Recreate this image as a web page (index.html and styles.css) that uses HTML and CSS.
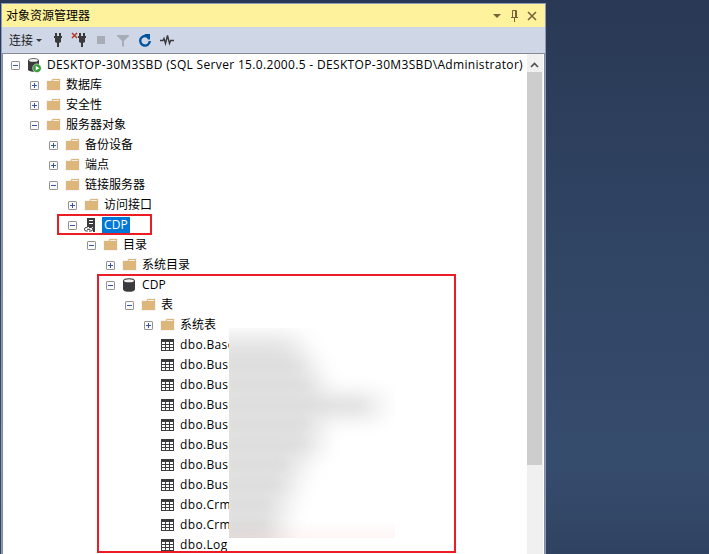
FILE: index.html
```
<!DOCTYPE html>
<html lang="zh-CN">
<head>
<meta charset="utf-8">
<title>对象资源管理器</title>
<link rel="stylesheet" href="styles.css">
</head>
<body>
<svg class="defs" width="0" height="0">
  <symbol id="folder" viewBox="0 0 16 14"><path class="halo" d="M0 2h5l1-2h9v13H0z"/><path class="tan" d="M1 3h4.5l1-2H14v11H1z"/><path class="fold" d="M6.5 3L7.3 2H13v1z"/></symbol>
  <symbol id="table" viewBox="0 0 16 14"><path class="ink" d="M1 1h13v12H1z"/><path class="paper" d="M2 4h3v2H2zM6 4h3v2H6zM10 4h3v2h-3zM2 7h3v2H2zM6 7h3v2H6zM10 7h3v2h-3zM2 10h3v2H2zM6 10h3v2H6zM10 10h3v2h-3z"/></symbol>
  <symbol id="database" viewBox="0 0 16 14"><path class="ink" d="M1 2.8C1-.5 13-.5 13 2.8v8.4c0 3.4-12 3.4-12 0z"/><ellipse class="lid" cx="7" cy="2.8" rx="4.9" ry="1.5"/></symbol>
  <symbol id="expand" viewBox="0 0 9 9"><rect class="box" x=".5" y=".5" width="8" height="8" rx=".6"/><path class="sign" d="M2 4.5h5M4.5 2v5"/></symbol>
  <symbol id="collapse" viewBox="0 0 9 9"><rect class="box" x=".5" y=".5" width="8" height="8" rx=".6"/><path class="sign" d="M2 4.5h5"/></symbol>
</svg>
<main class="panel">
  <header class="title"><h1>对象资源管理器</h1>
    <svg class="controls" width="46" height="12" viewBox="0 0 46 12"><path class="brown" d="M1 4h8L5 8z"/><path class="pin" d="M20.5 7V.5h4V7M19 7.5h7M22.5 7v5M23.5 1v6"/><path class="close" d="M36 2l8 8M44 2l-8 8"/></svg>
  </header>
  <div class="toolbar"><span>连接</span>
    <svg width="140" height="18" viewBox="0 0 140 18">
      <path class="ink" d="M1 8h6L4 11z"/>
      <path class="ink" d="M20 2h2v3h2V2h2v3h1v2h-1v4l-2 1v4h-2v-4l-2-1V7h-1V5h1z"/>
      <path class="redx" d="M37 2l5 5M42 2l-5 5"/>
      <path class="ink" d="M44 2h2v3h2V2h2v3h1v2h-1v4l-2 1v4h-2v-4l-2-1V7h-1V5h1z"/>
      <path class="disabled" d="M62 5h8v8h-8zM82 4h12v1l-5 5v6l-2-1v-5l-5-5z"/>
      <path class="refresh" d="M112.3 5.6A4.8 4.8 0 1 0 114.8 10"/><path class="blue" d="M109.5 3H115v5.5h-2z"/>
      <path class="pulse" d="M125 9.5h3l1-2 1.5 5 2-8 2 8 1.2-3h3.3"/>
    </svg>
  </div>
  <div class="body">
    <div class="tree">
      <div class="row"><svg class="toggle"><use href="#collapse"/></svg><svg class="icon server" viewBox="0 0 16 16"><path class="ink" d="M1 3.6C1 .3 12 .3 12 3.6v9c-1 2.8-11 2.8-11 0z"/><ellipse class="lid" cx="6.5" cy="3.4" rx="4.5" ry="1.4"/><circle class="green" cx="10" cy="11.2" r="4.3"/><path class="paper" d="M8.7 8.8v4.8l3.8-2.4z"/></svg><span class="root">DESKTOP-30M3SBD (SQL Server 15.0.2000.5 - DESKTOP-30M3SBD\Administrator)</span></div>
      <div class="row l1"><svg class="toggle"><use href="#expand"/></svg><svg class="icon"><use href="#folder"/></svg><span>数据库</span></div>
      <div class="row l1"><svg class="toggle"><use href="#expand"/></svg><svg class="icon"><use href="#folder"/></svg><span>安全性</span></div>
      <div class="row l1"><svg class="toggle"><use href="#collapse"/></svg><svg class="icon"><use href="#folder"/></svg><span>服务器对象</span></div>
      <div class="row l2"><svg class="toggle"><use href="#expand"/></svg><svg class="icon"><use href="#folder"/></svg><span>备份设备</span></div>
      <div class="row l2"><svg class="toggle"><use href="#expand"/></svg><svg class="icon"><use href="#folder"/></svg><span>端点</span></div>
      <div class="row l2"><svg class="toggle"><use href="#collapse"/></svg><svg class="icon"><use href="#folder"/></svg><span>链接服务器</span></div>
      <div class="row l3"><svg class="toggle"><use href="#expand"/></svg><svg class="icon"><use href="#folder"/></svg><span>访问接口</span></div>
      <div class="row l3"><svg class="toggle"><use href="#collapse"/></svg><svg class="icon linked" viewBox="0 0 16 16"><path class="ink" d="M3 1h8v14H9v-5H3z"/><path class="vent" d="M5 3.5h4M5 6.5h4"/><path class="chain" d="M3.5 10.5H2.2a1.7 1.7 0 0 0 0 3.5h1.6M5 10.5h2a1.7 1.7 0 0 1 0 3.5H5M3 12.3h3.4"/></svg><span class="cdp selected">CDP</span></div>
      <div class="row l4"><svg class="toggle"><use href="#collapse"/></svg><svg class="icon"><use href="#folder"/></svg><span>目录</span></div>
      <div class="row l5"><svg class="toggle"><use href="#expand"/></svg><svg class="icon"><use href="#folder"/></svg><span>系统目录</span></div>
      <div class="row l5"><svg class="toggle"><use href="#collapse"/></svg><svg class="icon"><use href="#database"/></svg><span class="cdp">CDP</span></div>
      <div class="row l6"><svg class="toggle"><use href="#collapse"/></svg><svg class="icon"><use href="#folder"/></svg><span>表</span></div>
      <div class="row l7"><svg class="toggle"><use href="#expand"/></svg><svg class="icon"><use href="#folder"/></svg><span>系统表</span></div>
      <div class="row leaf"><svg class="icon"><use href="#table"/></svg><span>dbo.Base</span></div>
      <div class="row leaf"><svg class="icon"><use href="#table"/></svg><span>dbo.Busi</span></div>
      <div class="row leaf"><svg class="icon"><use href="#table"/></svg><span>dbo.Busi</span></div>
      <div class="row leaf"><svg class="icon"><use href="#table"/></svg><span>dbo.Busi</span></div>
      <div class="row leaf"><svg class="icon"><use href="#table"/></svg><span>dbo.Busi</span></div>
      <div class="row leaf"><svg class="icon"><use href="#table"/></svg><span>dbo.Busi</span></div>
      <div class="row leaf"><svg class="icon"><use href="#table"/></svg><span>dbo.Busi</span></div>
      <div class="row leaf"><svg class="icon"><use href="#table"/></svg><span>dbo.Busi</span></div>
      <div class="row leaf"><svg class="icon"><use href="#table"/></svg><span>dbo.Crm</span></div>
      <div class="row leaf"><svg class="icon"><use href="#table"/></svg><span>dbo.Crm</span></div>
      <div class="row leaf"><svg class="icon"><use href="#table"/></svg><span>dbo.Log</span></div>
    </div>
    <div class="scroll"><svg width="15" height="17" viewBox="0 0 15 17"><path class="arrow" d="M4 12l3.5-3.5L11 12"/></svg><div class="thumb"></div></div>
  </div>
</main>
<svg class="redaction" width="166" height="210" viewBox="0 0 166 210">
  <defs><filter id="soft" x="-30%" y="-30%" width="160%" height="160%"><feGaussianBlur stdDeviation="13 10"/></filter>
  <linearGradient id="pink" x1="0" y1="0" x2="0" y2="1"><stop offset="0" stop-color="#e86450" stop-opacity="0"/><stop offset="1" stop-color="#e86450" stop-opacity=".06"/></linearGradient></defs>
  <path class="cover" d="M0 0h166v210H0z"/>
  <path class="smear" filter="url(#soft)" d="M-50 8H70v20H84v20H92v18H149v24H90v38H72v20H65v20H56v24H52v32H-50z"/>
  <path class="band" d="M0 37h75M0 57h85M0 77h135M0 97h80M0 117h80M0 137h60M0 157h55M0 177h42M0 196h40"/>
  <path fill="url(#pink)" d="M0 192h166v18H0z"/>
</svg>
<div class="mark mark-server"></div>
<div class="mark mark-tables"></div>
</body>
</html>
```

FILE: styles.css
```
* { box-sizing: border-box; }
html, body { margin: 0; height: 554px; overflow: hidden; }
body {
  position: relative;
  padding: 3px 0 0 1px;
  background: linear-gradient(#293955, #2d3f5d 130px, #364c6d 440px, #364c6d 470px, #304261);
  color: #000;
  font: 12px/20px "Open Sans", "Noto Sans CJK SC", sans-serif;
}
.defs { position: absolute; }
svg { display: block; flex: none; }
.panel { display: flex; flex-direction: column; width: 545px; height: 551px; border: 1px solid #8e9bbc; border-bottom: 0; }
.title { display: flex; align-items: center; justify-content: space-between; height: 23px; padding: 0 7px 0 4px; background: #fff29d; }
h1 { margin: 0; font-size: 12px; font-weight: 400; }
.toolbar { display: flex; align-items: center; height: 26px; padding-left: 7px; background: #cfd6e5; color: #1e1e1e; }
.toolbar span { padding-top: 2px; }
.toolbar svg { margin-left: 2px; }
.body { display: flex; flex: 1; min-height: 0; border: 1px solid #858b98; border-bottom: 0; background: #fff; }
.tree { flex: 1; padding-top: 1px; overflow: hidden; }
.row { display: flex; align-items: center; height: 20px; padding-left: 8px; white-space: nowrap; }
.l1 { padding-left: 27px; }
.l2 { padding-left: 46px; }
.l3 { padding-left: 65px; }
.l4 { padding-left: 84px; }
.l5 { padding-left: 103px; }
.l6 { padding-left: 122px; }
.l7 { padding-left: 141px; }
.leaf { padding-left: 157px; }
.toggle { width: 9px; height: 9px; margin-right: 7px; }
.icon { width: 16px; height: 14px; margin-right: 4px; }
.server, .linked { height: 16px; }
.root { letter-spacing: 0.33px; }
.leaf span { letter-spacing: 0.35px; }
.cdp { letter-spacing: 0.1px; }
.selected { height: 17px; margin: 1px 0 0 -2px; padding: 0 2px; background: #0078d7; color: #fff; line-height: 16px; }
.scroll { display: flex; flex-direction: column; width: 17px; padding: 1px 1px 0 0; border-right: 1px solid #fff; background: #f0f0f0; }
.thumb { width: 15px; height: 393px; background: #cdcdcd; }
.redaction { position: absolute; left: 229px; top: 328px; overflow: hidden; }
.mark { position: absolute; border: 2px solid #ed1c24; }
.mark-server { left: 57px; top: 214px; width: 95px; height: 21px; }
.mark-tables { left: 97px; top: 274px; width: 359px; height: 279px; }
.ink { fill: #3b3b3d; }
.paper { fill: #fff; }
.halo { fill: #f5f5f5; }
.tan { fill: #dcb67a; }
.fold { fill: #f5efe3; }
.lid { fill: #f2f2f2; }
.green { fill: #329b35; stroke: #fff; stroke-width: .6; }
.box { fill: #fafafa; stroke: #919191; }
.sign { stroke: #3655a5; }
.brown { fill: #75633d; }
.pin, .close { fill: none; stroke: #75633d; }
.close { stroke-width: 1.6; }
.redx { stroke: #b4382b; stroke-width: 1.5; }
.disabled { fill: #a8acb6; }
.refresh { fill: none; stroke: #00539c; stroke-width: 2.4; }
.blue { fill: #00539c; }
.pulse { fill: none; stroke: #3b3b3d; stroke-width: 1.4; }
.vent { stroke: #fff; }
.chain { fill: none; stroke: #3b3b3d; stroke-width: 1; }
.arrow { fill: none; stroke: #505050; stroke-width: 1.7; }
.cover { fill: #fff; }
.smear { fill: #e1e1e1; }
.band { fill: none; stroke: #808080; stroke-opacity: .04; stroke-width: 8; filter: blur(4px); }
```
